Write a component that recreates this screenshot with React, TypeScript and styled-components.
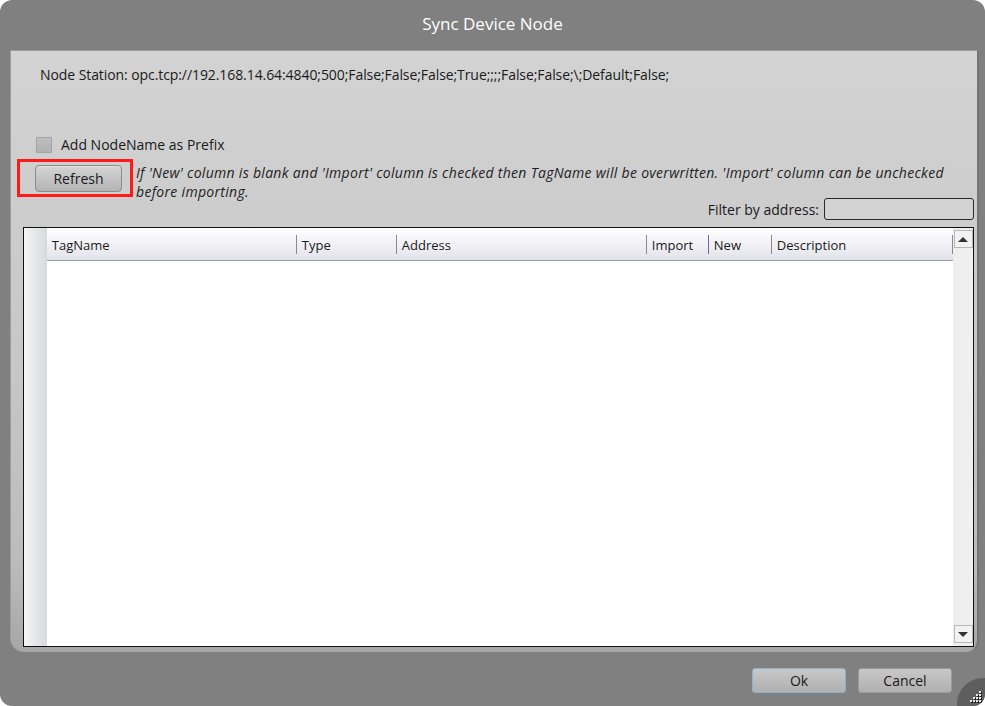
import React from 'react';
import styled, { createGlobalStyle } from 'styled-components';

const columns = [
  { label: 'TagName', width: 250, accent: false },
  { label: 'Type', width: 100, accent: false },
  { label: 'Address', width: 250, accent: false },
  { label: 'Import', width: 62, accent: true },
  { label: 'New', width: 63, accent: false },
  { label: 'Description', width: 181, accent: false },
];

const gripDots = [
  [12, 3],
  [9, 6],
  [12, 6],
  [6, 9],
  [9, 9],
  [12, 9],
  [3, 12],
  [6, 12],
  [9, 12],
  [12, 12],
];

const GlobalStyle = createGlobalStyle`
  html, body {
    margin: 0;
    padding: 0;
    background: #ffffff;
    font-family: 'Open Sans', 'Noto Sans', sans-serif;
  }
  #root {
    width: 985px;
    height: 706px;
  }
`;

const App = () => {
  return (
    <>
      <GlobalStyle />
      <SWindow>
        <STitleBar>Sync Device Node</STitleBar>
        <SPanel>
          <SNodeStation>
            Node Station: opc.tcp://192.168.14.64:4840;500;False;False;False;True;;;;False;False;\;Default;False;
          </SNodeStation>

          <SCheckRow>
            <SCheckbox />
            <span>Add NodeName as Prefix</span>
          </SCheckRow>

          <SRefreshRow>
            <SHighlight>
              <SButton>Refresh</SButton>
            </SHighlight>
            <SHint>
              If 'New' column is blank and 'Import' column is checked then TagName will be overwritten. 'Import' column can be unchecked before importing.
            </SHint>
          </SRefreshRow>

          <SFilterRow>
            <SFilterLabel>Filter by address:</SFilterLabel>
            <SFilterInput />
          </SFilterRow>

          <SGrid>
            <SRowHeader />
            <SGridMain>
              <SHeaderRow>
                {columns.map((col) => (
                  <SHeaderCell key={col.label} $width={col.width}>
                    <span>{col.label}</span>
                    <SSeparator $accent={col.accent} />
                  </SHeaderCell>
                ))}
              </SHeaderRow>
              <SGridBody />
            </SGridMain>
            <SScrollbar>
              <SScrollButton>
                <SArrow $up />
              </SScrollButton>
              <SScrollButton>
                <SArrow />
              </SScrollButton>
            </SScrollbar>
          </SGrid>
        </SPanel>

        <SFooter>
          <SDialogButton $focused>Ok</SDialogButton>
          <SDialogButton>Cancel</SDialogButton>
        </SFooter>

        <SGrip>
          <svg width="16" height="16" viewBox="0 0 16 16">
            {gripDots.map(([x, y]) => (
              <g key={`${x}-${y}`}>
                <rect x={x + 1} y={y + 1} width="2" height="2" fill="#1e1e1e" />
                <rect x={x} y={y} width="2" height="2" fill="#e8e8e8" />
              </g>
            ))}
          </svg>
        </SGrip>
      </SWindow>
    </>
  );
};

const SWindow = styled.div`
  position: relative;
  width: 985px;
  height: 706px;
  display: flex;
  flex-direction: column;
  background: #808080;
  border-radius: 12px;
  overflow: hidden;
  box-sizing: border-box;
`;

const STitleBar = styled.div`
  height: 50px;
  display: flex;
  align-items: center;
  justify-content: center;
  padding-bottom: 4px;
  box-sizing: border-box;
  color: #ffffff;
  font-size: 17px;
`;

const SPanel = styled.div`
  height: 602px;
  margin-left: 10px;
  margin-right: 6px;
  display: flex;
  flex-direction: column;
  padding: 14px 3px 5px 12px;
  box-sizing: border-box;
  background: linear-gradient(#d3d3d3 0%, #c6c6c6 55%, #bcbcbc 85%, #a6a6a6 100%);
  border-left: 1px solid #9c9c9c;
  border-right: 2px solid #747474;
  border-top: 1px solid #9a9a9a;
  border-radius: 0 0 12px 14px;
  color: #1a1a1a;
  font-size: 14px;
`;

const SNodeStation = styled.div`
  margin-left: 17px;
  line-height: 19px;
  letter-spacing: -0.08px;
`;

const SCheckRow = styled.div`
  display: flex;
  align-items: center;
  gap: 9px;
  margin-top: 51px;
  margin-left: 13px;
  height: 19px;
`;

const SCheckbox = styled.div`
  width: 16px;
  height: 16px;
  box-sizing: border-box;
  border: 1px solid #a4a4a4;
  background: linear-gradient(#bdbdbd, #b2b2b2);
`;

const SRefreshRow = styled.div`
  display: flex;
  align-items: flex-start;
  margin-top: -2px;
  margin-left: -6px;
`;

const SHighlight = styled.div`
  width: 116px;
  height: 38px;
  flex-shrink: 0;
  box-sizing: border-box;
  border: 3px solid #ff1a1a;
  display: flex;
  align-items: center;
  padding-left: 15px;
  margin-top: 7px;
`;

const SButton = styled.div`
  width: 87px;
  height: 27px;
  box-sizing: border-box;
  display: flex;
  align-items: center;
  justify-content: center;
  border: 1px solid #8c8c8c;
  border-radius: 4px;
  background: linear-gradient(#d4d4d4, #b4b4b4);
  box-shadow: inset 0 1px 0 #e4e4e4;
  color: #1a1a1a;
  font-size: 14px;
`;

const SHint = styled.div`
  margin-left: 3px;
  margin-top: 11px;
  margin-bottom: 3px;
  width: 822px;
  font-style: italic;
  font-size: 14px;
  line-height: 19px;
  letter-spacing: 0.3px;
  color: #1e1e1e;
`;

const SFilterRow = styled.div`
  display: flex;
  align-items: center;
  justify-content: flex-end;
  gap: 5px;
  margin-top: -6px;
  height: 22px;
`;

const SFilterLabel = styled.span`
  line-height: 14px;
  padding-top: 1px;
`;

const SFilterInput = styled.div`
  width: 150px;
  height: 22px;
  box-sizing: border-box;
  border: 1px solid #2a2a2a;
  border-radius: 3px;
  background: #d2d2d2;
`;

const SGrid = styled.div`
  flex: 1;
  margin-top: 7px;
  display: flex;
  border: 1px solid #111111;
  background: #ffffff;
  min-height: 0;
`;

const SRowHeader = styled.div`
  width: 25px;
  background: linear-gradient(90deg, #f6f6f6, #d8d9dd);
`;

const SGridMain = styled.div`
  flex: 1;
  display: flex;
  flex-direction: column;
`;

const SHeaderRow = styled.div`
  height: 33px;
  display: flex;
  box-sizing: border-box;
  border-bottom: 1px solid #9a9aa2;
  background: linear-gradient(#ffffff 0%, #f3f3f7 45%, #e2e2ea 100%);
`;

const SHeaderCell = styled.div<{ $width: number }>`
  position: relative;
  width: ${({ $width }) => $width}px;
  box-sizing: border-box;
  display: flex;
  align-items: center;
  padding: 2px 0 0 5px;
  color: #1a1a1a;
  font-size: 13px;
`;

const SSeparator = styled.div<{ $accent?: boolean }>`
  position: absolute;
  right: 0;
  top: 7px;
  bottom: 6px;
  width: 1px;
  background: ${({ $accent }) => ($accent ? '#6a6a9a' : '#8a8a96')};
`;

const SGridBody = styled.div`
  flex: 1;
  background: #ffffff;
`;

const SScrollbar = styled.div`
  width: 21px;
  display: flex;
  flex-direction: column;
  justify-content: space-between;
  background: #efefef;
  padding: 2px 0 3px 1px;
`;

const SScrollButton = styled.div`
  width: 19px;
  height: 18px;
  box-sizing: border-box;
  border: 1px solid #b8b8b8;
  background: #f2f2f2;
  display: flex;
  align-items: center;
  justify-content: center;
`;

const SArrow = styled.div<{ $up?: boolean }>`
  width: 0;
  height: 0;
  border-left: 5px solid transparent;
  border-right: 5px solid transparent;
  ${({ $up }) =>
    $up ? 'border-bottom: 5px solid #333333;' : 'border-top: 5px solid #333333;'}
`;

const SFooter = styled.div`
  flex: 1;
  display: flex;
  justify-content: flex-end;
  align-items: flex-start;
  gap: 12px;
  padding: 16px 33px 0 0;
`;

const SDialogButton = styled.div<{ $focused?: boolean }>`
  width: 94px;
  height: 25px;
  box-sizing: border-box;
  display: flex;
  align-items: center;
  justify-content: center;
  border: 1px solid ${({ $focused }) => ($focused ? '#8fb0cf' : '#9a9a9a')};
  border-radius: 3px;
  background: linear-gradient(#c8c8c8, #b0b0b0);
  color: #1a1a1a;
  font-size: 14px;
`;

const SGrip = styled.div`
  position: absolute;
  right: 0;
  bottom: 0;
  width: 28px;
  height: 28px;
  background: #5e5e5e;
  border-top-left-radius: 26px;
  display: flex;
  align-items: flex-end;
  justify-content: flex-end;
  padding: 0 2px 2px 0;
  box-sizing: border-box;
`;

export default App;
